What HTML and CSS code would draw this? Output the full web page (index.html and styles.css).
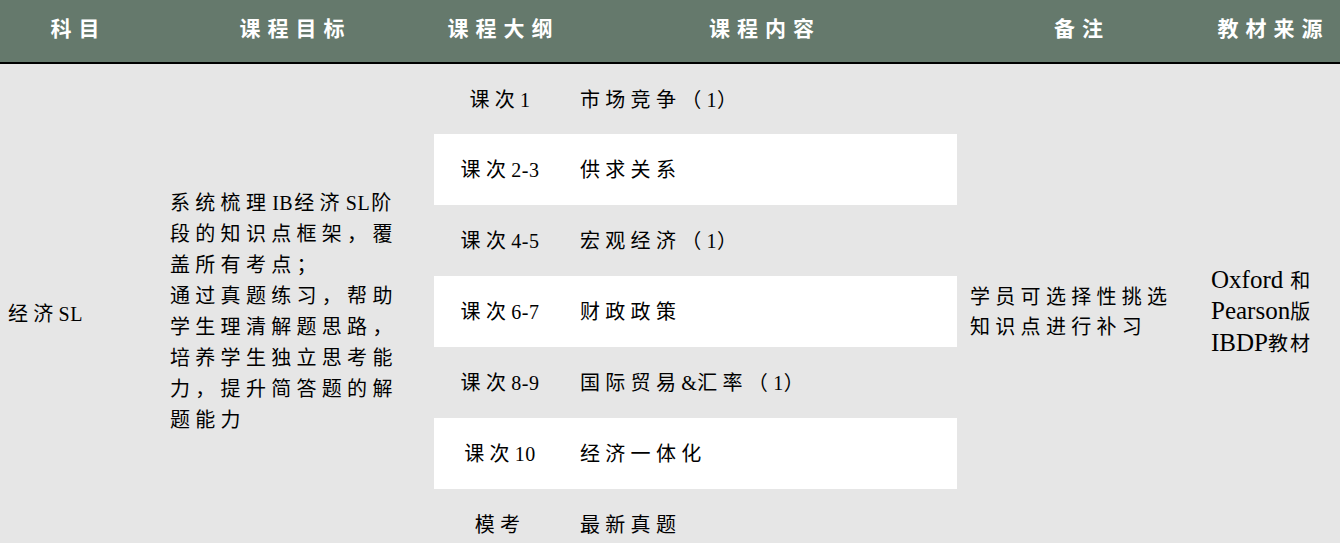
FILE: index.html
```html
<!DOCTYPE html>
<html lang="zh-CN">
<head>
<meta charset="utf-8">
<title>课程表</title>
<link rel="stylesheet" href="styles.css">
</head>
<body>
<table class="course">
  <colgroup>
    <col class="c-subject">
    <col class="c-goal">
    <col class="c-outline">
    <col class="c-content">
    <col class="c-note">
    <col class="c-source">
  </colgroup>
  <thead>
    <tr>
      <th>科目</th>
      <th>课程目标</th>
      <th>课程大纲</th>
      <th>课程内容</th>
      <th class="th-note">备注</th>
      <th>教材来源</th>
    </tr>
  </thead>
  <tbody>
    <tr>
      <td rowspan="7" class="subject">经济<span class="en">SL</span></td>
      <td rowspan="7" class="goal">系统梳理<span class="en gap">IB</span>经济<span class="en gap">SL</span>阶段的知识点框架，覆盖所有考点；<br>通过真题练习，帮助学生理清解题思路，培养学生独立思考能力，提升简答题的解题能力</td>
      <td class="outline">课次<span class="en">1</span></td>
      <td class="content">市场竞争（<span class="en">1</span>）</td>
      <td rowspan="7" class="note">学员可选择性挑选知识点进行补习</td>
      <td rowspan="7" class="source"><span class="en big">Oxford</span> 和<br><span class="en big">Pearson</span>版<br><span class="en big">IBDP</span>教材</td>
    </tr>
    <tr class="alt">
      <td class="outline">课次<span class="en">2-3</span></td>
      <td class="content">供求关系</td>
    </tr>
    <tr>
      <td class="outline">课次<span class="en">4-5</span></td>
      <td class="content">宏观经济（<span class="en">1</span>）</td>
    </tr>
    <tr class="alt">
      <td class="outline">课次<span class="en">6-7</span></td>
      <td class="content">财政政策</td>
    </tr>
    <tr>
      <td class="outline">课次<span class="en">8-9</span></td>
      <td class="content">国际贸易<span class="en">&amp;</span>汇率（<span class="en">1</span>）</td>
    </tr>
    <tr class="alt">
      <td class="outline">课次<span class="en">10</span></td>
      <td class="content">经济一体化</td>
    </tr>
    <tr>
      <td class="outline">模考</td>
      <td class="content">最新真题</td>
    </tr>
  </tbody>
</table>
</body>
</html>
```
FILE: styles.css
```css
html {
  overflow: hidden;
}

body {
  margin: 0;
  background: #e6e6e6;
  font-family: "Liberation Serif", "Noto Sans CJK SC", serif;
  color: #000;
}

.course {
  width: 1340px;
  table-layout: fixed;
  border-collapse: collapse;
  border-spacing: 0;
  background: #e6e6e6;
}

.c-subject { width: 150px; }
.c-goal { width: 284px; }
.c-outline { width: 132px; }
.c-content { width: 391px; }
.c-note { width: 243px; }
.c-source { width: 140px; }

.course th {
  height: 54px;
  padding: 0 0 8px 7px;
  background: #65796c;
  border-bottom: 2px solid #000;
  color: #fff;
  font-family: "Noto Sans CJK SC", sans-serif;
  font-size: 21px;
  font-weight: 700;
  letter-spacing: 7px;
  text-align: center;
  vertical-align: middle;
}

.course td {
  padding: 0;
  font-family: "Liberation Serif", "Noto Sans CJK SC", serif;
  font-size: 20px;
  letter-spacing: 5.3px;
  vertical-align: middle;
}

.en {
  letter-spacing: 0.5px;
}

.en.gap {
  margin: 0 1px;
}

.en.big {
  font-size: 25px;
  letter-spacing: 0;
}

.course tbody tr {
  height: 71px;
}

.course tbody tr.alt .outline,
.course tbody tr.alt .content {
  background: #fff;
}

.course td.subject {
  padding: 0 0 0 8px;
}

.course td.goal {
  padding: 0 20px 0 20px;
  line-height: 31px;
}

.course td.outline {
  text-align: center;
  padding-bottom: 2px;
}

.course td.content {
  padding: 0 0 2px 14px;
}

.course td.note {
  padding: 0 20px 0 13px;
  line-height: 30.5px;
}

.course td.source {
  padding: 0 0 0 11px;
  line-height: 30.5px;
  letter-spacing: 2px;
}
```
